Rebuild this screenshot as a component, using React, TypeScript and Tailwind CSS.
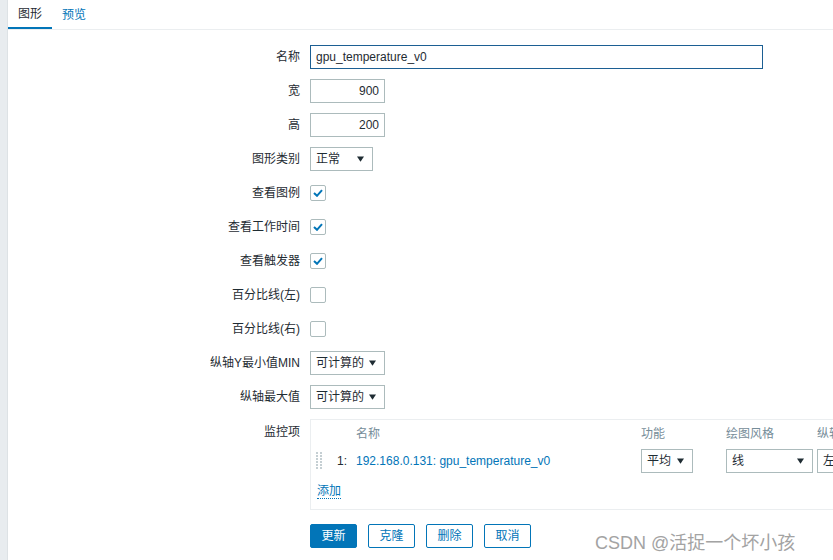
import React from "react";

const FONT = "font-['Liberation_Sans','Noto_Sans_CJK_SC',sans-serif]";

const Arrow = () => (
  <svg width="7" height="6" viewBox="0 0 7 6" className="shrink-0">
    <path d="M0 0.5 L7 0.5 L3.5 5.8 Z" fill="#1f2c33" />
  </svg>
);

const Select: React.FC<{ value: string; width: string }> = ({ value, width }) => (
  <div
    className={`${width} h-[24px] border border-[#acbbbc] bg-white flex items-center justify-between pl-[5px] pr-[8px] text-[12px] text-[#1f2c33]`}
  >
    <span>{value}</span>
    <Arrow />
  </div>
);

const Checkbox: React.FC<{ checked?: boolean }> = ({ checked }) => (
  <div className="w-[16px] h-[16px] border border-[#acbbbc] rounded-[2px] bg-white flex items-center justify-center">
    {checked && (
      <svg width="10" height="8" viewBox="0 0 10 8">
        <path d="M1 4 L4 6.8 L9 1.2" fill="none" stroke="#0275b8" strokeWidth="2" />
      </svg>
    )}
  </div>
);

const Row: React.FC<{ label: string; children: React.ReactNode; top?: boolean }> = ({
  label,
  children,
  top,
}) => (
  <div className={`flex ${top ? "items-start" : "items-center"} min-h-[24px]`}>
    <div
      className={`w-[292px] shrink-0 text-right text-[12px] text-[#1f2c33] ${top ? "pt-[4px]" : ""}`}
    >
      {label}
    </div>
    <div className="ml-[10px] flex items-center">{children}</div>
  </div>
);

const DragHandle = () => (
  <svg width="6" height="18" viewBox="0 0 6 18">
    {[0, 3, 6, 9, 12, 15].map((y) => (
      <g key={y}>
        <rect x="0" y={y} width="2" height="2" fill="#c5cfd3" />
        <rect x="4" y={y} width="2" height="2" fill="#c5cfd3" />
      </g>
    ))}
  </svg>
);

const Button: React.FC<{ label: string; primary?: boolean }> = ({ label, primary }) => (
  <button
    className={`w-[47px] h-[24px] rounded-[2px] border border-[#0275b8] text-[12px] ${
      primary ? "bg-[#0275b8] text-white" : "bg-white text-[#0275b8]"
    }`}
  >
    {label}
  </button>
);

export default function App() {
  return (
    <div className={`relative w-[833px] h-[560px] overflow-hidden flex bg-white ${FONT}`}>
      <div className="w-[8px] shrink-0 bg-[#e8ecef] border-r border-[#dde2e5]" />
      <div className="flex-1 min-w-0">
        <div className="flex h-[30px] border-b border-[#ebeef0]">
          <div className="h-[29px] px-[10px] flex items-center border-b-2 border-[#0275b8] text-[12px] text-[#1f2c33]">
            图形
          </div>
          <div className="h-[29px] px-[10px] flex items-center text-[12px] text-[#0275b8]">
            预览
          </div>
        </div>

        <div className="pt-[15px] flex flex-col gap-[10px]">
          <Row label="名称">
            <div className="w-[453px] h-[24px] border border-[#1c5f93] bg-white flex items-center px-[5px] text-[12px] text-[#1f2c33]">
              gpu_temperature_v0
            </div>
          </Row>
          <Row label="宽">
            <div className="w-[75px] h-[24px] border border-[#acbbbc] bg-white flex items-center justify-end px-[5px] text-[12px] text-[#1f2c33]">
              900
            </div>
          </Row>
          <Row label="高">
            <div className="w-[75px] h-[24px] border border-[#acbbbc] bg-white flex items-center justify-end px-[5px] text-[12px] text-[#1f2c33]">
              200
            </div>
          </Row>
          <Row label="图形类别">
            <Select value="正常" width="w-[63px]" />
          </Row>
          <Row label="查看图例">
            <Checkbox checked />
          </Row>
          <Row label="查看工作时间">
            <Checkbox checked />
          </Row>
          <Row label="查看触发器">
            <Checkbox checked />
          </Row>
          <Row label="百分比线(左)">
            <Checkbox />
          </Row>
          <Row label="百分比线(右)">
            <Checkbox />
          </Row>
          <Row label="纵轴Y最小值MIN">
            <Select value="可计算的" width="w-[75px]" />
          </Row>
          <Row label="纵轴最大值">
            <Select value="可计算的" width="w-[75px]" />
          </Row>
          <Row label="监控项" top>
            <div className="w-[600px] h-[91px] border border-[#ebeef0] pt-[6px] text-[12px]">
              <div className="flex h-[16px] items-center text-[#768d99]">
                <div className="w-[45px] shrink-0" />
                <div className="w-[285px] shrink-0">名称</div>
                <div className="w-[85px] shrink-0">功能</div>
                <div className="w-[91px] shrink-0">绘图风格</div>
                <div className="shrink-0">纵轴</div>
              </div>
              <div className="flex h-[24px] items-center mt-[7px]">
                <div className="w-[26px] shrink-0 pl-[5px] flex items-center">
                  <DragHandle />
                </div>
                <div className="w-[19px] shrink-0 text-[#1f2c33]">1:</div>
                <div className="w-[285px] shrink-0 text-[#0275b8]">
                  192.168.0.131: gpu_temperature_v0
                </div>
                <div className="w-[85px] shrink-0">
                  <Select value="平均" width="w-[52px]" />
                </div>
                <div className="w-[91px] shrink-0">
                  <Select value="线" width="w-[87px]" />
                </div>
                <div className="shrink-0">
                  <Select value="左" width="w-[60px]" />
                </div>
              </div>
              <div className="mt-[10px] h-[16px] flex items-center pl-[6px]">
                <span className="text-[#0275b8] border-b border-dotted border-[#0275b8] leading-[14px]">
                  添加
                </span>
              </div>
            </div>
          </Row>
        </div>

        <div className="mt-[14px] ml-[302px] flex gap-[11px]">
          <Button label="更新" primary />
          <Button label="克隆" />
          <Button label="删除" />
          <Button label="取消" />
        </div>
      </div>

      <div className="absolute left-[595px] top-[530px] text-[18px] text-[#a3a3a3] [text-shadow:0_0_2px_white]">
        CSDN @活捉一个坏小孩
      </div>
    </div>
  );
}
